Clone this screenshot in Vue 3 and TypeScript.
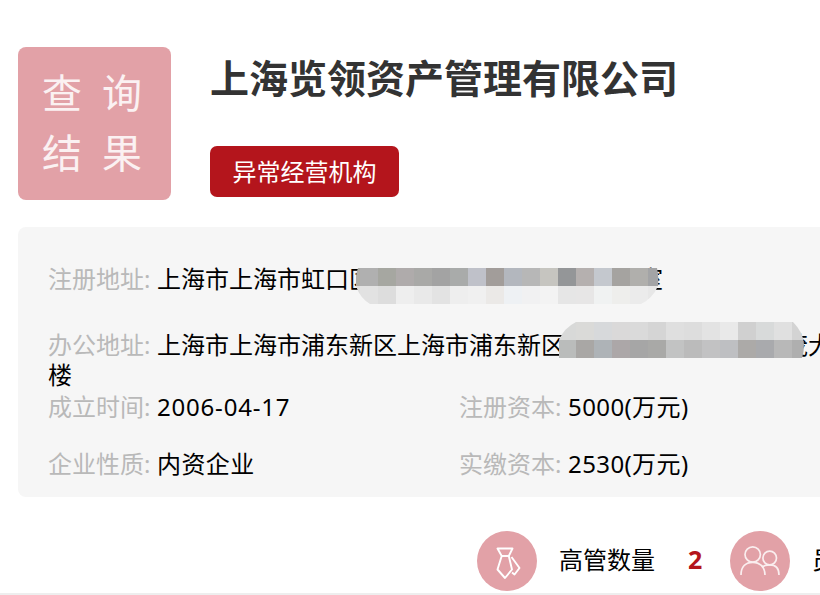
<script setup lang="ts">
interface Mosaic {
	left: number;
	top: number;
	width: number;
	offset: number;
	path: string;
	rows: string[][];
}

interface Field {
	label: string;
	value: string;
	date?: boolean;
}

// size of one mosaic square
const cell: number = 18;

const registered: Mosaic = {
	left: 308,
	top: 4,
	width: 303,
	offset: -14,
	path: 'M2 0H301Q303 9 302 18Q297 30 285 36H14Q4 30 0 18Q-1 8 2 0Z',
	rows: [
		['#afaea8', '#b0b0b0', '#a6a7a1', '#afabab', '#a9a9a7', '#a3a3a3', '#a9abaa', '#bfc1c9', '#a29d9a', '#b3b7be', '#b7b7b7', '#c6c5c0', '#949698', '#b5b0af', '#c4c8ce', '#a5a3a0', '#b0afac', '#a3a4a6'],
		['#dedede', '#e2e2e2', '#dddddd', '#eeeeee', '#e9e9e9', '#e3e3e3', '#eeeeee', '#f0f0f0', '#ebe9e7', '#eef1f4', '#f1f1f2', '#f3f3f3', '#e6e6e6', '#e7e6e6', '#f0f2f2', '#eeeeec', '#ebebeb', '#e7e7e7']
	]
};

const office: Mosaic = {
	left: 511,
	top: -8,
	width: 246,
	offset: -1,
	path: 'M17 0H234Q244 10 245 22Q245 30 243 36H0V18Q5 6 17 0Z',
	rows: [
		['#d8d9d8', '#dadad8', '#d7d9db', '#dad9d9', '#dadada', '#d5d5d5', '#dfdfdf', '#dddddd', '#e3e3e3', '#e9e9e9', '#d0d0d0', '#d8dada', '#e0e0e0', '#d3d3d3'],
		['#babcbb', '#a9a7a5', '#aeb3b7', '#aca7a8', '#a6a6a6', '#a9a9a7', '#c2c3c3', '#bbbbbb', '#c2c2c3', '#bebfc2', '#acaaa8', '#a9aaad', '#b8b8b8', '#afafaf']
	]
};

const details: Field[] = [
	{ label: '成立时间', value: '2006-04-17', date: true },
	{ label: '注册资本', value: '5000(万元)' },
	{ label: '企业性质', value: '内资企业' },
	{ label: '实缴资本', value: '2530(万元)' }
];
</script>

<template>
	<div class="page">
		<header class="top">
			<div class="stamp">
				<span>查询</span>
				<span>结果</span>
			</div>
			<div class="company">
				<h1>上海览领资产管理有限公司</h1>
				<span class="tag">异常经营机构</span>
			</div>
		</header>

		<section class="panel">
			<div class="address">
				<label>注册地址:</label>上海市上海市虹口区<i class="gap registered"></i>室
				<svg class="mosaic" :style="{ left: registered.left + 'px', top: registered.top + 'px' }" :width="registered.width" height="36">
					<clipPath id="registeredClip"><path :d="registered.path" /></clipPath>
					<g clip-path="url(#registeredClip)" shape-rendering="crispEdges">
						<template v-for="(row, y) in registered.rows" :key="y">
							<rect v-for="(color, x) in row" :key="x" :x="registered.offset + x * cell" :y="y * cell" :width="cell" :height="cell" :fill="color" />
						</template>
					</g>
				</svg>
			</div>
			<div class="address office">
				<label>办公地址:</label>上海市上海市浦东新区上海市浦东新区<i class="gap"></i>茂大<br>楼
				<svg class="mosaic" :style="{ left: office.left + 'px', top: office.top + 'px' }" :width="office.width" height="36">
					<clipPath id="officeClip"><path :d="office.path" /></clipPath>
					<g clip-path="url(#officeClip)" shape-rendering="crispEdges">
						<template v-for="(row, y) in office.rows" :key="y">
							<rect v-for="(color, x) in row" :key="x" :x="office.offset + x * cell" :y="y * cell" :width="cell" :height="cell" :fill="color" />
						</template>
					</g>
				</svg>
			</div>
			<div class="details">
				<div v-for="d in details" :key="d.label">
					<label>{{ d.label }}:</label><span class="value" :class="{ date: d.date }">{{ d.value }}</span>
				</div>
			</div>
		</section>

		<footer class="stats">
			<span class="icon">
				<svg width="60" height="60" viewBox="0 0 60 60">
					<path d="M20.5 17.5H35.5L31.8 25L35 38.5L28 47L20.5 38.5L24.7 25Z" />
					<path d="M24.5 25H32" />
					<path d="M34.5 26L42.5 37L37.5 43.5L35 41.5" />
				</svg>
			</span>
			<span class="name">高管数量</span>
			<b>2</b>
			<span class="icon">
				<svg class="thin" width="60" height="60" viewBox="0 0 60 60">
					<circle cx="22.7" cy="23.5" r="7.7" />
					<circle cx="39.7" cy="27" r="6.8" />
					<path d="M11 44C11 35.5 16 31.3 22.7 31.3S35 35.5 35 44" />
					<path d="M32 36C34 34.3 36.5 33.8 39.7 33.8C45.5 33.8 49 37.5 49 44" />
				</svg>
			</span>
			<span class="name">员</span>
		</footer>
	</div>
</template>

<style>
body {
	margin: 0;
	background: #fff;
}
</style>

<style scoped>
.page {
	box-sizing: border-box;
	width: 820px;
	height: 595px;
	padding: 47px 0 0 18px;
	overflow: hidden;
	border-bottom: 2px solid #eee;
	color: #000;
	font: 24px/30px "Noto Sans", "Noto Sans CJK SC", sans-serif;
	white-space: nowrap;
}
.top {
	display: flex;
	height: 180px;
}
.stamp {
	box-sizing: border-box;
	width: 153px;
	height: 153px;
	padding: 16px 0 0 24px;
	border-radius: 8px;
	background: #e2a1a7;
	color: #fbf1f2;
	font-size: 40px;
	line-height: 60px;
	letter-spacing: 20px;
}
.stamp span {
	display: block;
}
.company {
	margin-left: 39px;
}
h1 {
	height: 60px;
	margin: 1px 0 38px;
	color: #333;
	font-size: 39px;
	line-height: 60px;
}
.tag {
	display: block;
	width: 189px;
	height: 51px;
	border-radius: 7px;
	background: #b4151c;
	color: #fff;
	line-height: 51px;
	text-align: center;
}
.panel {
	box-sizing: border-box;
	width: 1100px;
	height: 270px;
	padding: 37px 30px 0;
	border-radius: 8px;
	background: #f6f6f6;
}
label {
	display: inline-block;
	width: 109px;
	color: #b9b9b9;
}
.address {
	position: relative;
}
.office {
	margin-top: 36px;
}
.gap {
	display: inline-block;
	width: 219px;
}
.gap.registered {
	width: 266px;
}
.mosaic {
	position: absolute;
}
.details {
	display: grid;
	grid-template-columns: 411px auto;
	row-gap: 27px;
	margin-top: 2px;
}
.value {
	letter-spacing: .4px;
}
.value.date {
	letter-spacing: .8px;
}
.stats {
	display: flex;
	align-items: center;
	height: 60px;
	margin: 34px 0 0 459px;
}
.icon {
	flex: none;
	width: 60px;
	height: 60px;
	border-radius: 50%;
	background: #e2a1a7;
}
.icon svg {
	display: block;
	fill: none;
	stroke: #fff;
	stroke-width: 1.9;
	stroke-linejoin: round;
}
.icon .thin {
	stroke: #faeeef;
	stroke-width: 1.7;
}
.name {
	flex: none;
	margin: -2px 0 0 22px;
}
b {
	flex: none;
	width: 42px;
	margin: -4px 0 0 33px;
	color: #b4151c;
	font-size: 25px;
}
</style>
